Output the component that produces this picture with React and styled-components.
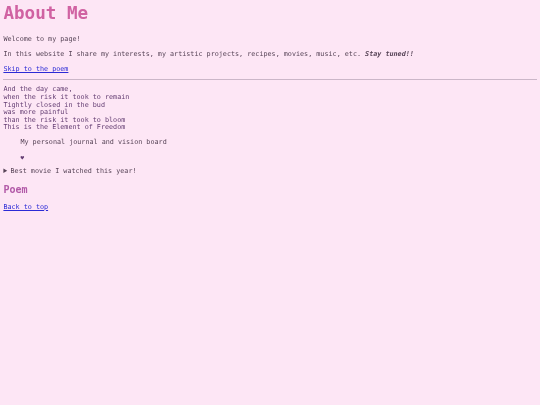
import React from "react";
import styled, { createGlobalStyle } from "styled-components";

const Global = createGlobalStyle`
  html, body { margin: 0; padding: 0; background: #fde6f5; }
  body {
    font-family: "DejaVu Sans Mono", "Liberation Mono", monospace;
    -webkit-font-smoothing: antialiased;
  }
`;

const Page = styled.div`
  padding: 3px 3.4px;
  font-size: 6.75px;
  line-height: 7.6px;
  color: #574457;
  will-change: transform;
`;

const Title = styled.h1`
  margin: 0;
  padding-bottom: 5px;
  font-size: 17.6px;
  line-height: 21px;
  font-weight: bold;
  color: #d062a2;
`;

const Para = styled.p`
  margin: ${(p) => p.$mt || "7.4px"} 0 0;
`;

const Link = styled.a`
  color: #2b2bd6;
  text-decoration: underline;
`;

const Rule = styled.hr`
  margin: 5.2px 0 0;
  border: none;
  border-top: 1px solid #cbb6c8;
  height: 0;
`;

const Poem = styled.pre`
  margin: 6.6px 0 0;
  font-family: inherit;
  font-size: inherit;
  line-height: 7.6px;
  color: #633d72;
`;

const Figure = styled.figure`
  margin: 7px 0 0 17px;
`;

const Caption = styled.div`
  color: #574457;
`;

const Heart = styled.div`
  margin-top: 7px;
  color: #633d72;
  font-size: 6px;
`;

const Details = styled.details`
  margin-top: 7px;
  summary {
    cursor: pointer;
  }
`;

const SubTitle = styled.h2`
  margin: 8.2px 0 0;
  font-size: 10px;
  line-height: 12px;
  font-weight: bold;
  color: #b25aa8;
`;

export default function App() {
  return (
    <>
      <Global />
      <Page>
        <Title id="top">About Me</Title>
        <Para $mt="7px">Welcome to my page!</Para>
        <Para>
          In this website I share my interests, my artistic projects, recipes,
          movies, music, etc. <b><i>Stay tuned!!</i></b>
        </Para>
        <Para>
          <Link href="#poem">Skip to the poem</Link>
        </Para>
        <Rule />
        <Poem>{`And the day came,
when the risk it took to remain
Tightly closed in the bud
was more painful
than the risk it took to bloom
This is the Element of Freedom`}</Poem>
        <Figure>
          <Caption>My personal journal and vision board</Caption>
          <Heart>♥</Heart>
        </Figure>
        <Details>
          <summary>Best movie I watched this year!</summary>
        </Details>
        <SubTitle id="poem">Poem</SubTitle>
        <Para $mt="8px">
          <Link href="#top">Back to top</Link>
        </Para>
      </Page>
    </>
  );
}
